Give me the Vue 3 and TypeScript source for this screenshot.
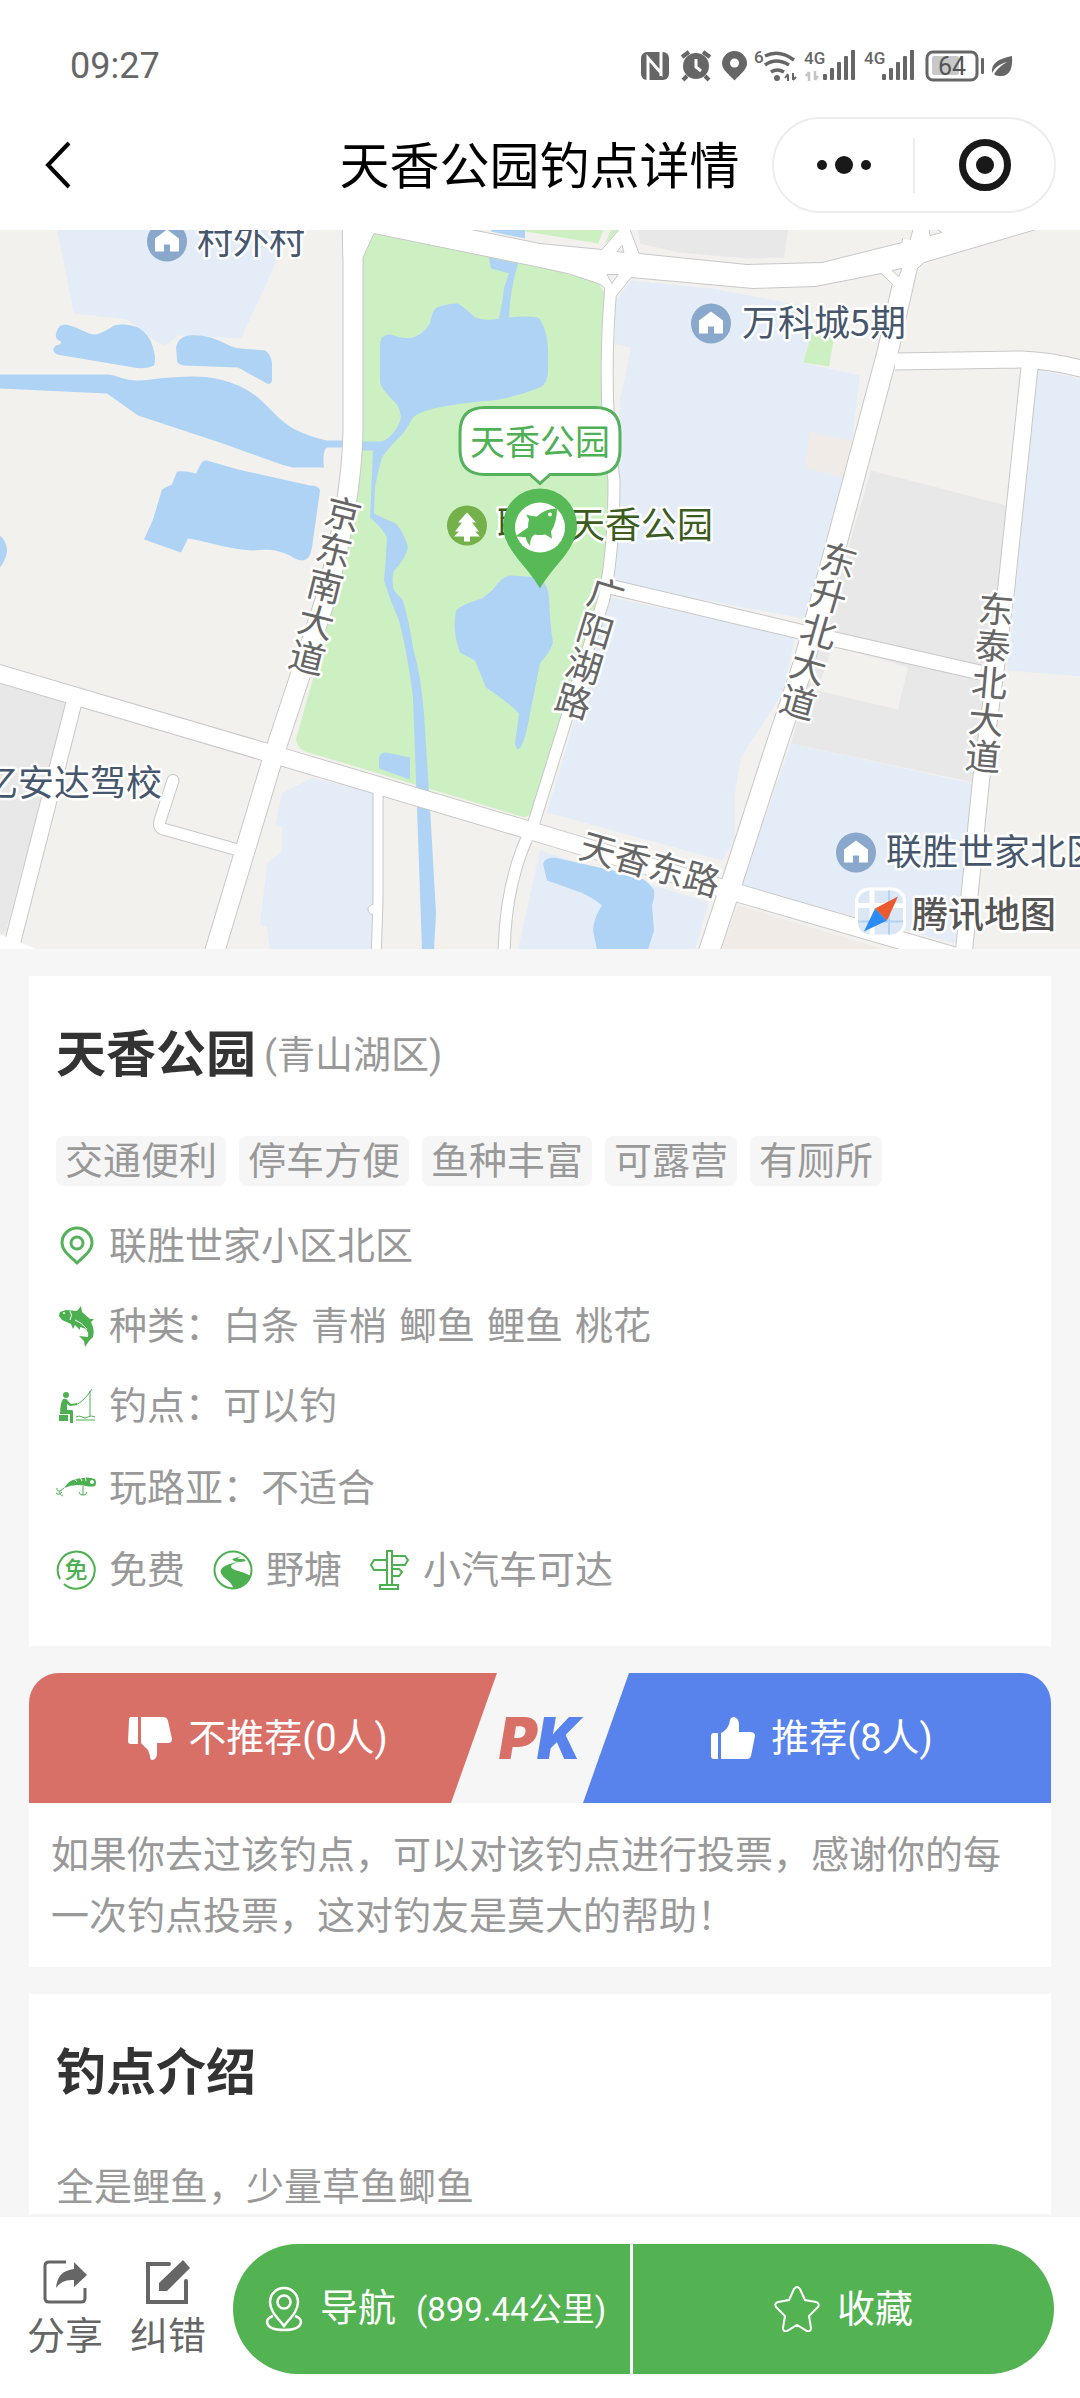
<script setup lang="ts">
interface Poi {
  name: string
  x: number
  y: number
  iconX: number
  iconY: number
}

interface RoadLabel {
  name: string
  x: number
  y: number
  angle: number
}

const title = '天香公园钓点详情'

const pois: Poi[] = [
  { name: '村外村', x: 197, y: 253, iconX: 167, iconY: 241 },
  { name: '万科城5期', x: 742, y: 335, iconX: 711, iconY: 323 },
  { name: '联胜世家北区', x: 886, y: 864, iconX: 856, iconY: 852 },
]

const roadLabels: RoadLabel[] = [
  { name: '京东南大道', x: 343, y: 514, angle: 14 },
  { name: '东升北大道', x: 839, y: 560, angle: 16 },
  { name: '东泰北大道', x: 996, y: 609, angle: 5 },
  { name: '广阳湖路', x: 606, y: 595, angle: 17 },
]

const tags: string[] = ['交通便利', '停车方便', '鱼种丰富', '可露营', '有厕所']
const species: string[] = ['白条', '青梢', '鲫鱼', '鲤鱼', '桃花']
const votes = { down: 0, up: 8 }
const distance = '899.44'
const signalBars: number[] = [6, 12, 18, 24, 30]
</script>

<template>
  <div class="page" lang="zh-CN">
    <header class="top">
      <div class="status">
        <span class="time">09:27</span>
        <svg class="status-icons" viewBox="636 44 384 44" width="384" height="44" aria-hidden="true">
          <rect x="641" y="52" width="28" height="28" rx="6" fill="#666" />
          <path d="M648 80V58l13 15V54M648 58v22M661 76V52" fill="none" stroke="#fff" stroke-width="3" />
          <g fill="#666" stroke="#666">
            <circle cx="696" cy="66" r="13" stroke="none" />
            <path d="M682 57l7-5M710 57l-7-5M687 76l-4 4M705 76l4 4" stroke-width="4" />
          </g>
          <path d="M696 59v8l5 4" fill="none" stroke="#fff" stroke-width="3" />
          <path d="M734.500 51a12.500 12.500 0 0 1 12.500 12.500c0 6-7 11-12.500 17-5.500-6-12.500-11-12.500-17A12.500 12.500 0 0 1 734.500 51z" fill="#666" />
          <circle cx="734.500" cy="63" r="4.500" fill="#fff" />
          <text x="754" y="63" class="net">6</text>
          <g fill="none" stroke="#666" stroke-width="3.500">
            <path d="M765 56q14-7 29 4M765 65q11-8 24 0M771 72q6-4 13 0" />
            <path d="M788 81v-6M788 74l-3 4M793 73v7M793 80l3-3" stroke-width="2" />
          </g>
          <circle cx="777" cy="78" r="3" fill="#666" />
          <path d="M809 81v-9M806 76l3-4M815 71v9M815 80l3-4" stroke="#c4c4c4" stroke-width="2.500" fill="none" />
          <text x="804" y="64" class="net">4G</text>
          <text x="864" y="64" class="net">4G</text>
          <template v-for="(h, i) in signalBars" :key="h">
            <rect :x="823 + i * 7" :y="80 - h" width="4" :height="h" rx="1" fill="#666" />
            <rect :x="882 + i * 7" :y="80 - h" width="4" :height="h" rx="1" fill="#666" />
          </template>
          <rect x="932" y="56" width="27" height="19" rx="2" fill="#c8c8c8" />
          <rect x="927" y="52" width="50" height="28" rx="6" fill="none" stroke="#666" stroke-width="3" />
          <rect x="981" y="58" width="3" height="16" rx="1" fill="#666" />
          <text x="938" y="75" class="battery">64</text>
          <path d="M1012 56c1 12-2 20-11 20-3 0-5 0-7-2 4-6 8-9 13-12-7 2-12 5-15 11-1-9 5-14 20-17z" fill="#666" />
        </svg>
      </div>
      <div class="nav">
        <button class="back" type="button" aria-label="返回">
          <svg viewBox="0 0 30 50" width="30" height="50">
            <path d="M26 3L5 25l21 22" fill="none" stroke="#000" stroke-width="4" />
          </svg>
        </button>
        <h1>{{ title }}</h1>
        <div class="capsule">
          <button type="button" aria-label="更多">
            <svg viewBox="0 0 60 60" width="60" height="60" fill="#191919">
              <circle cx="8" cy="30" r="5" /><circle cx="30" cy="30" r="9" /><circle cx="52" cy="30" r="5" />
            </svg>
          </button>
          <i class="capsule-line"></i>
          <button type="button" aria-label="关闭">
            <svg viewBox="0 0 60 60" width="60" height="60">
              <circle cx="30" cy="30" r="22.500" fill="none" stroke="#191919" stroke-width="7" />
              <circle cx="30" cy="30" r="9" fill="#191919" />
            </svg>
          </button>
        </div>
      </div>
    </header>

    <svg class="map" viewBox="0 229 1080 720" preserveAspectRatio="xMidYMid slice" role="img" aria-label="地图">
      <rect y="229" width="1080" height="720" fill="#f2f1ed" />
      <!-- residential and industrial blocks -->
      <g fill="#e4edf7">
        <path d="M57 229l17 84 53 6 28 21 10 5 14-10 62 3 36-78v-31z" />
        <path d="M616 300l15-20 81 8 90 17 10 27-10 30 58 13-8 65-9 37-23 83-15 58-191-35 6-183 11-53-16-3z" />
        <path d="M611 597l184 38-11 55-43 67-6 36v45l-13 22-175-48z" />
        <path d="M791 743l182 40-18 160-214-58z" />
        <path d="M1038 369l42 9v298l-73-6z" />
        <path d="M312 777l62 16v156H270l-3-22-7-4 7-60 15-13v-23l-7-2 7-32z" />
        <path d="M540 850l169 52-14 47H518z" />
      </g>
      <g fill="#e8e8e8">
        <path d="M638 229l2 14 38 9 69 6 37-1 4-28z" />
        <path d="M871 470l136 35-33 277-183-39z" />
        <path d="M0 683l67 20L5 933H0z" />
      </g>
      <path d="M833 645l75 22-10 42-81-19z" fill="#f2f1ed" />
      <path d="M810 432l42 8-9 37-38-10zM738 905l146 44H722z" fill="#f0ebe6" />
      <!-- parkland -->
      <g fill="#cdf0c3">
        <path d="M374 233l-11 24-2 176-6 74-24 106-35 126q2 12 16 14l213 64 12-7 67-230 6-83-7-127 3-75-8-13-58-16z" />
        <path d="M812 332l22 5-5 29-26-4z" />
        <path d="M525 229h79l-6 14-60-10-13-2zM611 229h9l-15 15z" />
      </g>
      <!-- water -->
      <g fill="#aed3f5">
        <path d="M57 330q2-6 8-6c14 2 20 10 31 10q8-2 18-9c8-2 16-1 24 2q12 7 15 20c2 8 3 12 1 18q-8 4-20 2l-77-13q-7-4-1-9 6-1 5-4-8-3-4-11z" />
        <path d="M176 347q2-10 12-12 12-1 22 2c14 4 20 10 31 11l24 2q6 3 7 13v17q-1 4-5 3l-29-16-54-2q-8-1-7-7z" />
        <path d="M0 374h107c12 1 16 6 31 6 14 0 20-3 34-3q30-3 48 2 22 5 38 18c14 12 20 22 35 31q18 9 34 12h16v7h-16q-5 3-3 20h-31q-10-2-20-6l-53-19-82-27-31-22L0 388z" />
        <path d="M177 471q8-1 19 2l4-8q2-5 7-5l31 9 72 16q9 0 10 5l-8 57q-2 12-9 13-6 0-13-5c-15-7-24-6-38-5-22-1-40-8-64-12l-7 14-37-13 9-20 9-30q5-3 10-5z" />
        <path d="M0 535q14 13 0 32z" />
        <path d="M491 229h34v9l-34-7z" />
        <path d="M382 337Q385 334 391 334Q403 339 413 337Q424 333 430 323Q432 310 437 307Q447 303 458 303Q466 308 475 317Q487 321 499 318Q503 300 504 287L509 273Q500 270 491 268L489 257L518 263Q510 290 509 317Q528 315 538 317Q546 325 548 347V370Q548 383 540 387Q515 397 492 400Q462 402 434 408Q418 412 413 417Q405 432 399 437Q388 448 382 457Q377 475 375 487L374 513Q384 518 396 523Q405 534 408 547Q406 558 394 570Q391 580 394 590L403 600Q410 625 413 647Q421 675 424 713L430 807L436 913L434 949H422L417 807L413 697Q408 655 399 620Q390 600 384 580Q386 560 387 537Q382 527 370 517L373 450H361V441H382Q396 435 401 417Q400 408 396 403Q388 395 382 387Q380 384 380 380V345Q380 340 382 337z" />
        <path d="M492 590q10-14 18-15l30 2q8 8 9 20 1 28 4 45-2 8-13 21l-10 50q-6 36-13 36l-2-6 4-30q-12-12-33-26l-11-27-15-8q-8-20-4-42 6-6 26-12z" />
        <path d="M379 757q1-5 7-5l24 5v22l-31-11z" />
        <path d="M543 863q2-6 11-6l72 16q20 3 28 17 1 5-2 15l2 25-6 19h-51l-4-19q1-14 9-25-6-6-21-13l-34-12z" />
      </g>
      <!-- road casing, then road surface -->
      <g fill="none" stroke="#c8c8c8" stroke-linejoin="round">
        <path d="M611 285Q602 390 614 480Q614 550 604 598L533 825Q504 880 504 960" stroke-width="13" />
        <path d="M378 790V900L376 960" stroke-width="11" />
        <path d="M173 780L160 820Q158 828 165 829L240 850" stroke-width="13" stroke-linecap="round" />
        <path d="M75 698L8 960" stroke-width="17" />
        <path d="M605 585L800 631L980 672" stroke-width="16" />
        <path d="M895 361L1022 359Q1050 360 1085 369M1030 362L1006 590L981 780L963 960" stroke-width="18" />
        <path d="M-5 672L267 752L530 830L736 892L970 960" stroke-width="19" />
        <path d="M353 225V430Q352 500 325 600L273 757L212 960" stroke-width="21" />
        <path d="M913 240L888 350L836 545L803 665L776 746L731 885L706 960" stroke-width="22" />
      </g>
      <circle cx="373" cy="909" r="5" fill="#fff" stroke="#c8c8c8" />
      <path
        d="M342 220h130l-1 9 69 14 62 6 17-20v-9h10l1 9 9 24 108 11 75-2 88-22 3-11v-9h150l-27 9-112 33-28 25-15-14q-34 7-66 13l-62 2-122-11-15 19h-10q2-9-8-13-28-11-58-16L374 233l-11 24h-20z"
        fill="#fff" stroke="#c8c8c8"
      />
      <g fill="none" stroke="#fff" stroke-linejoin="round">
        <path d="M611 285Q602 390 614 480Q614 550 604 598L533 825Q504 880 504 960" stroke-width="11" />
        <path d="M378 790V900L376 960" stroke-width="9" />
        <path d="M173 780L160 820Q158 828 165 829L240 850" stroke-width="11" stroke-linecap="round" />
        <path d="M75 698L8 960" stroke-width="15" />
        <path d="M605 585L800 631L980 672" stroke-width="14" />
        <path d="M895 361L1022 359Q1050 360 1085 369M1030 362L1006 590L981 780L963 960" stroke-width="16" />
        <path d="M-5 672L267 752L530 830L736 892L970 960" stroke-width="17" />
        <path d="M353 225V430Q352 500 325 600L273 757L212 960" stroke-width="19" />
        <path d="M913 240L888 350L836 545L803 665L776 746L731 885L706 960" stroke-width="20" />
      </g>
      <path d="M0 934l40 16H0z" fill="#fff" />
      <path d="M617 251l5-6 2 7zM607 274h11l-6 9zM929 229l1 6 12-3-5-3zM892 270l10-2-3 8z" fill="#f2f1ed" stroke="#c8c8c8" />

      <g v-for="poi in pois" :key="poi.name">
        <circle :cx="poi.iconX" :cy="poi.iconY" r="20" fill="#8aa8cb" />
        <path :transform="`translate(${poi.iconX} ${poi.iconY})`" d="M0-12l12 9v13H3V3h-6v7h-9V-3z" fill="#fff" />
        <text class="poi" :x="poi.x" :y="poi.y">{{ poi.name }}</text>
      </g>
      <text class="poi" x="162" y="795" text-anchor="end">亿安达驾校</text>

      <circle cx="467" cy="525" r="20" fill="#74b14b" />
      <path d="M467 512l9 10h-4l7 9h-4l5 5h-10v5h-6v-5h-10l5-5h-4l7-9h-4z" fill="#fff" />
      <text class="poi poi-park" x="497" y="537">联胜天香公园</text>

      <text
        v-for="road in roadLabels" :key="road.name" class="road"
        :transform="`translate(${road.x} ${road.y}) rotate(${road.angle})`" text-anchor="middle"
      >
        <tspan v-for="(char, i) in road.name" :key="i" x="0" :y="13 + i * 37">{{ char }}</tspan>
      </text>
      <text class="road" transform="translate(650 864) rotate(16)" y="13" text-anchor="middle">天香东路</text>

      <!-- selected spot -->
      <path
        d="M485 407h110q25 0 25 25v17q0 25-25 25h-45l-10 9-10-9h-45q-25 0-25-25v-17q0-25 25-25z"
        fill="#fff" stroke="#55b15b" stroke-width="3"
      />
      <text class="bubble" x="540" y="454" text-anchor="middle">天香公园</text>
      <path d="M540 488a37 37 0 0 1 37 37c0 24-24 40-37 63-13-23-37-39-37-63a37 37 0 0 1 37-37z" fill="#58b957" />
      <circle cx="540" cy="527" r="25" fill="#fff" />
      <path
        d="M526 514q6 2 11 2 8-8 20-8 0 14-6 23l1 7-7-4q-6 1-10 0-5 2-5 11-4-4-4-8-6-1-11-1l13-9q0-5 1-8z"
        fill="#58b957"
      />
      <circle cx="550" cy="514" r="2" fill="#fff" />

      <!-- map provider mark -->
      <rect x="855" y="887" width="51" height="50" rx="14" fill="#fff" />
      <rect x="858" y="890" width="45" height="44" rx="12" fill="#dbe7f5" />
      <path d="M872 890v44M858 905h45" stroke="#fff" stroke-width="5" />
      <path d="M889 890v44M858 921h45" stroke="#b0d3f6" stroke-width="2" />
      <path d="M864 931l11-23 12 12z" fill="#2b8cf5" />
      <path d="M898 896l-23 12 12 12z" fill="#ea5a2e" />
      <text class="provider" x="912" y="927">腾讯地图</text>
    </svg>

    <main>
      <section class="card">
        <div class="heading">
          <h2>天香公园</h2>
          <span class="district">(青山湖区)</span>
        </div>
        <ul class="tags">
          <li v-for="tag in tags" :key="tag">{{ tag }}</li>
        </ul>
        <div class="row">
          <svg class="icon" viewBox="0 0 40 40" fill="none" stroke="#55b15b" stroke-width="3">
            <path d="M21 2a15 15 0 0 1 15 15C36 25 27 31 21 37 15 31 6 25 6 17a15 15 0 0 1 15-15z" />
            <circle cx="21" cy="17" r="6" />
          </svg>
          <span>联胜世家小区北区</span>
        </div>
        <div class="row">
          <svg class="icon" viewBox="0 0 40 40" fill="#4cb050">
            <path d="M3 9l1-3 6-2 11 1 4-5 1 6 8 7h4l-3 3q4 8 2 15l-4 4-4 6-1-6-5-5 9 1q1-4-2-8l-6-2v3l-5-5-2 4-2-5-9-4-3-4z" />
            <path d="M14 5q3 4 0 9M19 14q6 2 12 9" stroke="#fff" fill="none" />
            <circle cx="8" cy="7" r="1" fill="#fff" />
          </svg>
          <span>种类：</span>
          <span class="species"><span v-for="fish in species" :key="fish">{{ fish }}</span></span>
        </div>
        <div class="row">
          <svg class="icon" viewBox="0 0 40 40" fill="#4cb050">
            <circle cx="10" cy="9" r="3" />
            <path d="M7 13q4-1 5 2l3 3 6-1v2l-7 1-3-2v6h5q1 0 1 2v11h-3V28H4q0-10 3-15zM3 29h9v6H3z" />
            <path d="M20 19q8-4 16-16M34 5v25M20 31q3-2 6 0t6 0 7 0M20 34h19" fill="none" stroke="#4cb050" />
          </svg>
          <span>钓点：可以钓</span>
        </div>
        <div class="row row-tall">
          <svg class="icon" viewBox="0 0 40 40" fill="#4cb050">
            <path d="M8 20q5-8 12-9 12-3 19 0 2 4 0 7-4 1-9 0-11-3-22 2z" />
            <path d="M18 10l3 4M24 9l2 4M29 9l1 4" stroke="#fff" stroke-width="1" />
            <circle cx="36" cy="14" r="2" fill="#fff" />
            <path d="M27 18v9M23 24q1 4 4 3 3 1 4-3M8 20l-4 3M1 20q-1 3 3 3-1 4 3 5M0 25q3 3 6-1" fill="none" stroke="#4cb050" />
          </svg>
          <span>玩路亚：不适合</span>
        </div>
        <div class="row row-group">
          <span class="item">
            <svg class="icon" viewBox="0 0 40 40">
              <path d="M8 34A18.500 18.500 0 1 0 4 29" fill="none" stroke="#4cb050" stroke-width="2" />
              <text x="20" y="28" text-anchor="middle" class="free">免</text>
            </svg>
            <span>免费</span>
          </span>
          <span class="item">
            <svg class="icon" viewBox="0 0 40 40">
              <circle cx="20" cy="20" r="18.500" fill="none" stroke="#4cb050" stroke-width="2" />
              <path d="M31 9q-8 0-6-1l4-2-10 3q2 3 8 3-12 1-18 6-4 5 4 11 6 4 7 9 11 0 18-12-8-4-16-6-7-3-2-6 5-2 13-3z" fill="#4cb050" />
            </svg>
            <span>野塘</span>
          </span>
          <span class="item">
            <svg class="icon" viewBox="0 0 40 40" fill="none" stroke="#4cb050" stroke-width="2">
              <path d="M17 1h5v34h-5zM10 35h18v4H10zM22 6h13l3 4-3 5H22zM17 10H4l-3 5 3 5h13zM22 19h7l3 3-3 4h-7z" />
            </svg>
            <span>小汽车可达</span>
          </span>
        </div>
      </section>

      <section class="vote">
        <div class="vote-bar">
          <button class="against" type="button">
            <svg viewBox="0 0 44 44" width="44" height="44" fill="#fff">
              <path d="M3 1h7v27H3q-3 0-3-3l1-21q0-3 2-3zM13 1h22q4 0 5 4l4 18q0 4-4 4H29v10q0 7-5 7-2 0-2-4l-2-6-7-7z" />
            </svg>
            <span>不推荐({{ votes.down }}人)</span>
          </button>
          <span class="pk"><b>P</b><b>K</b></span>
          <button class="favour" type="button">
            <svg viewBox="0 0 44 44" width="44" height="44" fill="#fff">
              <path d="M3 17h4v26H3q-3 0-3-3V20q0-3 3-3zM10 43V17q8-4 9-13 1-3 4-3 5 1 5 8v7h11q5 0 5 4l-4 20q-1 3-4 3z" />
            </svg>
            <span>推荐({{ votes.up }}人)</span>
          </button>
        </div>
        <p>如果你去过该钓点，可以对该钓点进行投票，感谢你的每一次钓点投票，这对钓友是莫大的帮助！</p>
      </section>

      <section class="card intro">
        <h2>钓点介绍</h2>
        <p>全是鲤鱼，少量草鱼鲫鱼</p>
      </section>
    </main>

    <footer>
      <button class="tool" type="button">
        <svg viewBox="0 0 44 44" width="44" height="44">
          <path d="M23 2H6Q2 2 2 6v32q0 4 4 4h32q4 0 4-4V28" fill="none" stroke="#666" stroke-width="3" />
          <path d="M31 2l13 13-13 12v-7q-12-1-18 8 1-17 18-19z" fill="#666" />
        </svg>
        <span>分享</span>
      </button>
      <button class="tool" type="button">
        <svg viewBox="0 0 44 44" width="44" height="44">
          <path d="M23 4H2v38h38V21" fill="none" stroke="#666" stroke-width="4" stroke-linecap="round" />
          <path d="M37 0l7 8-23 23h-8v-8z" fill="#666" />
        </svg>
        <span>纠错</span>
      </button>
      <div class="actions">
        <button class="go" type="button">
          <svg viewBox="0 0 38 46" width="38" height="46" fill="none" stroke="#fff" stroke-width="2.500">
            <path d="M19 2a14 14 0 0 1 14 14c0 10-9 17-14 24C14 33 5 26 5 16A14 14 0 0 1 19 2z" />
            <circle cx="19" cy="16" r="6.500" />
            <path d="M8 30q-6 2-6 6 1 8 17 8t17-8q0-4-6-6" />
          </svg>
          <span class="go-text">导航<small>({{ distance }}公里)</small></span>
        </button>
        <button class="save" type="button">
          <svg viewBox="0 0 46 46" width="46" height="46" fill="none" stroke="#fff" stroke-width="2">
            <path d="M20 3q3-4 6 0l5 11 11 2q4 1 2 5l-9 9 2 12q0 4-4 3l-10-6-10 6q-4 1-4-3l2-12-9-9q-2-4 2-5l11-2z" />
          </svg>
          <span>收藏</span>
        </button>
      </div>
    </footer>
  </div>
</template>

<style>
body {
  margin: 0;
  background: #f6f6f6;
}
</style>

<style scoped>
.page {
  min-height: 100vh;
  display: flex;
  flex-direction: column;
  background: #f6f6f6;
  color: #999;
  font-family: Roboto, 'Noto Sans CJK SC', sans-serif;
  font-size: 38px;
  line-height: 50px;
}

button {
  box-sizing: border-box;
  border: 0;
  padding: 0;
  background: none;
  color: inherit;
  font: inherit;
  cursor: pointer;
}

svg {
  display: block;
  flex-shrink: 0;
}

h1,
h2,
p,
ul {
  margin: 0;
  padding: 0;
}

.top {
  height: 230px;
  background: #fff;
}

.status {
  display: flex;
  justify-content: space-between;
  align-items: center;
  height: 117px;
  padding: 15px 60px 0 70px;
  box-sizing: border-box;
}

.time {
  font-size: 36px;
  color: #666;
}

.status-icons {
  height: 44px;
}

.net {
  font: 500 17px Roboto, sans-serif;
  fill: #666;
}

.battery {
  font: 25px Roboto, sans-serif;
  fill: #555;
}

.nav {
  display: grid;
  grid-template-columns: 1fr auto 1fr;
  align-items: center;
  height: 96px;
  padding: 0 24px 0 43px;
}

.back {
  justify-self: start;
}

h1 {
  margin-left: -20px;
  padding-top: 4px;
  font-size: 50px;
  font-weight: 400;
  line-height: 70px;
  color: #000;
}

.capsule {
  justify-self: end;
  display: flex;
  align-items: center;
  width: 284px;
  height: 96px;
  box-sizing: border-box;
  border: 2px solid #ededed;
  border-radius: 48px;
}

.capsule button {
  flex: 1;
  display: flex;
  justify-content: center;
}

.capsule-line {
  width: 2px;
  height: 55px;
  background: #ececec;
}

.map {
  width: 100%;
  height: 719px;
}

.poi,
.road,
.bubble,
.provider {
  font-family: 'Noto Sans CJK SC', sans-serif;
  font-size: 36px;
}

.poi,
.road,
.provider {
  stroke: #fff;
  stroke-width: 5px;
  stroke-linejoin: round;
  paint-order: stroke;
}

.poi {
  fill: #46566c;
}

.poi-park {
  fill: #3c5b1f;
}

.road {
  fill: #666;
}

.bubble {
  fill: #4fb055;
  font-size: 35px;
}

.provider {
  fill: #555;
  font-weight: 500;
}

main {
  display: flex;
  flex-direction: column;
  gap: 27px;
  padding: 27px 29px 0;
}

.card {
  padding: 44px 27px 36px;
  background: #fff;
}

.heading {
  display: flex;
  align-items: center;
  gap: 8px;
  height: 70px;
}

h2 {
  font-size: 50px;
  line-height: 70px;
  font-weight: 700;
  color: #333;
}

.tags {
  display: flex;
  flex-wrap: wrap;
  gap: 13px;
  margin: 46px 0 20px;
  list-style: none;
}

.tags li {
  padding: 0 9px;
  border-radius: 8px;
  background: #f6f6f6;
}

.row {
  display: flex;
  align-items: center;
  height: 80px;
}

.row-tall {
  height: 84px;
}

.row-group {
  gap: 28px;
}

.item {
  display: flex;
  align-items: center;
}

.icon {
  width: 40px;
  height: 40px;
  margin-right: 13px;
  overflow: visible;
}

.free {
  fill: #4cb050;
  font-size: 23px;
  font-weight: 500;
}

.species {
  display: flex;
  gap: 12px;
}

.vote {
  background: #fff;
}

.vote-bar {
  display: flex;
  height: 130px;
  background: #f6f6f6;
}

.against,
.favour {
  flex: 1;
  display: flex;
  align-items: center;
  justify-content: center;
  gap: 16px;
  color: #fff;
}

.against {
  padding-right: 10px;
  border-radius: 30px 0 0 0;
  background: #d87068;
  clip-path: polygon(0 0, 100% 0, calc(100% - 46px) 100%, 0 100%);
}

.favour {
  padding-left: 10px;
  border-radius: 0 30px 0 0;
  background: #5882ec;
  clip-path: polygon(46px 0, 100% 0, 100% 100%, 0 100%);
}

.pk {
  display: flex;
  align-items: center;
  justify-content: center;
  width: 132px;
  margin: 0 -23px;
  font-family: Inter, sans-serif;
  font-size: 58px;
  font-style: italic;
}

.pk b {
  font-weight: 900;
  color: #d87068;
}

.pk b:last-child {
  color: #5882ec;
}

.vote p {
  padding: 22px 22px 20px;
  line-height: 61px;
}

.intro {
  padding: 44px 27px 2px;
}

.intro p {
  margin-top: 54px;
}

footer {
  position: sticky;
  bottom: 0;
  display: flex;
  align-items: center;
  gap: 27px;
  margin-top: auto;
  height: 186px;
  box-sizing: border-box;
  padding: 0 26px 0 27px;
  border-top: 3px solid #f6f6f6;
  background: #fff;
}

.tool {
  display: flex;
  flex-direction: column;
  align-items: center;
  gap: 7px;
  padding-top: 4px;
  color: #666;
}

.actions {
  flex: 1;
  display: grid;
  grid-template-columns: 397fr 421fr;
  gap: 3px;
  height: 130px;
  border-radius: 65px;
  overflow: hidden;
  color: #fff;
}

.actions button {
  display: flex;
  align-items: center;
  justify-content: center;
  gap: 17px;
  background: #53b251;
}

.actions .go {
  padding-left: 8px;
}

.go-text {
  display: flex;
  align-items: baseline;
  gap: 20px;
}

small {
  font-size: 33px;
}
</style>
